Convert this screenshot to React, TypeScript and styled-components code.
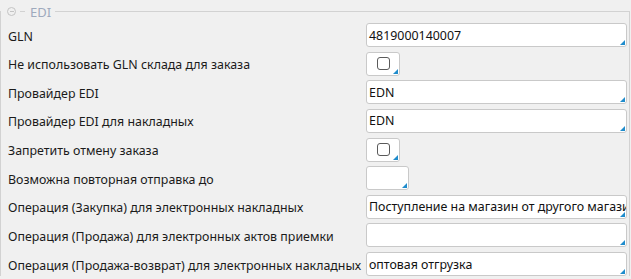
import React from 'react';
import styled, { createGlobalStyle } from 'styled-components';

type Field =
  | { label: string; kind: 'text'; value: string }
  | { label: string; kind: 'check' }
  | { label: string; kind: 'date' };

const fields: Field[] = [
  { label: 'GLN', kind: 'text', value: '4819000140007' },
  { label: 'Не использовать GLN склада для заказа', kind: 'check' },
  { label: 'Провайдер EDI', kind: 'text', value: 'EDN' },
  { label: 'Провайдер EDI для накладных', kind: 'text', value: 'EDN' },
  { label: 'Запретить отмену заказа', kind: 'check' },
  { label: 'Возможна повторная отправка до', kind: 'date' },
  {
    label: 'Операция (Закупка) для электронных накладных',
    kind: 'text',
    value: 'Поступление на магазин от другого магазина',
  },
  { label: 'Операция (Продажа) для электронных актов приемки', kind: 'text', value: '' },
  {
    label: 'Операция (Продажа-возврат) для электронных накладных',
    kind: 'text',
    value: 'оптовая отгрузка',
  },
];

const App = () => {
  return (
    <>
      <GlobalStyle />
      <Group>
        <Legend>
          <CollapseIcon />
          <LegendDash />
          <LegendText>EDI</LegendText>
        </Legend>
        <Rows>
          {fields.map((field) => (
            <Row key={field.label}>
              <Label>{field.label}</Label>
              {field.kind === 'text' && (
                <Box $width={261}>
                  <BoxText>{field.value}</BoxText>
                  <Corner />
                </Box>
              )}
              {field.kind === 'check' && (
                <Box $width={34} $center>
                  <CheckSquare />
                  <Corner />
                </Box>
              )}
              {field.kind === 'date' && (
                <Box $width={43}>
                  <Corner />
                </Box>
              )}
            </Row>
          ))}
        </Rows>
      </Group>
    </>
  );
};

export default App;

// css

const GlobalStyle = createGlobalStyle`
  html, body {
    margin: 0;
    background: #f0f0f0;
  }

  body {
    font-family: 'Noto Sans', 'Open Sans', sans-serif;
    font-size: 12.4px;
    color: #1b1b1b;
  }
`;

const Group = styled.fieldset`
  width: 630px;
  box-sizing: border-box;
  margin: 0;
  padding: 0 2px 0 7px;
  min-inline-size: 0;

  border: 1px solid #d2d2d2;
  border-bottom: none;
`;

const Legend = styled.legend`
  display: flex;
  align-items: center;
  height: 23px;
  margin-left: -7px;
  padding: 0 4px 0 6px;
`;

const CollapseIcon = styled.span`
  position: relative;
  width: 7px;
  height: 7px;
  border: 1.5px solid #c4c4c4;
  border-radius: 50%;

  &::after {
    content: '';
    position: absolute;
    left: 1.5px;
    right: 1.5px;
    top: 2.75px;
    height: 1.5px;
    background: #c4c4c4;
  }
`;

const LegendDash = styled.span`
  width: 5px;
  height: 1px;
  margin: 0 5px 0 4px;
  background: #d2d2d2;
`;

const LegendText = styled.span`
  color: #9eaabd;
  font-size: 13px;
`;

const Rows = styled.div`
  display: grid;
  grid-auto-rows: 24px;
  row-gap: 4.625px;
`;

const Row = styled.div`
  display: grid;
  grid-template-columns: 358px 261px;
  align-items: center;
`;

const Label = styled.div`
  padding-top: 2px;
  white-space: nowrap;
`;

const Box = styled.div<{ $width: number; $center?: boolean }>`
  position: relative;
  display: flex;
  align-items: center;
  justify-content: ${(p) => (p.$center ? 'center' : 'flex-start')};
  width: ${(p) => p.$width}px;
  height: 24px;
  box-sizing: border-box;
  padding: ${(p) => (p.$center ? '0 0 0 1px' : '0 0 0 2px')};
  overflow: hidden;

  background: #fff;
  border: 1px solid #c9c9c9;
  border-radius: 3px;
`;

const BoxText = styled.span`
  white-space: nowrap;
  color: #111;
`;

const Corner = styled.span`
  position: absolute;
  right: 1px;
  bottom: 1px;
  width: 0;
  height: 0;
  border-left: 5px solid transparent;
  border-bottom: 5px solid #1f8ccc;
`;

const CheckSquare = styled.span`
  width: 13px;
  height: 13px;
  box-sizing: border-box;
  border: 1px solid #5a5a5a;
  border-radius: 3px;
  background: #fff;
`;
